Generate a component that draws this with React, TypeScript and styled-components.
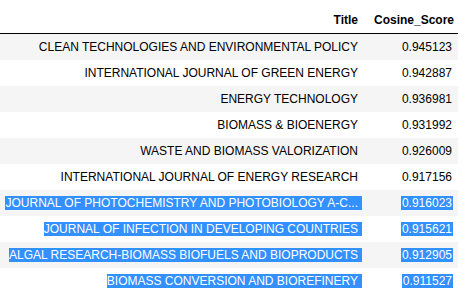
import React from 'react'
import styled, { createGlobalStyle } from 'styled-components'

const GlobalStyle = createGlobalStyle`
  body {
    margin: 0;
    background: #fff;
    font-family: 'Liberation Sans', Arial, sans-serif;
  }
`

const Wrapper = styled.div`
  padding-top: 7px;
`

const Table = styled.table`
  border-collapse: collapse;
  border-spacing: 0;
  table-layout: fixed;
  width: 458px;
  font-size: 12px;
  color: #000;
`

const HeadRow = styled.tr`
  border-bottom: 1px solid #000;
`

const Th = styled.th<{ $pad: number }>`
  text-align: right;
  font-weight: bold;
  line-height: 14px;
  padding: 6px ${(p) => p.$pad}px 6px 6px;
  white-space: nowrap;
`

const Row = styled.tr`
  &:nth-child(odd) {
    background: #f5f5f5;
  }
`

const Td = styled.td<{ $pad: number }>`
  text-align: right;
  line-height: 14px;
  padding: 6px ${(p) => p.$pad}px 6px 0;
  white-space: nowrap;
  overflow: hidden;
`

const Sel = styled.span<{ $selected: boolean; $wide?: boolean }>`
  padding: ${(p) => (p.$wide ? '0 4px 0 0' : '0 1px')};
  background: ${(p) => (p.$selected ? '#3390ff' : 'transparent')};
  color: ${(p) => (p.$selected ? '#fff' : '#000')};
`

const rows: [string, string][] = [
  ['CLEAN TECHNOLOGIES AND ENVIRONMENTAL POLICY', '0.945123'],
  ['INTERNATIONAL JOURNAL OF GREEN ENERGY', '0.942887'],
  ['ENERGY TECHNOLOGY', '0.936981'],
  ['BIOMASS & BIOENERGY', '0.931992'],
  ['WASTE AND BIOMASS VALORIZATION', '0.926009'],
  ['INTERNATIONAL JOURNAL OF ENERGY RESEARCH', '0.917156'],
  ['JOURNAL OF PHOTOCHEMISTRY AND PHOTOBIOLOGY A-C...', '0.916023'],
  ['JOURNAL OF INFECTION IN DEVELOPING COUNTRIES', '0.915621'],
  ['ALGAL RESEARCH-BIOMASS BIOFUELS AND BIOPRODUCTS', '0.912905'],
  ['BIOMASS CONVERSION AND BIOREFINERY', '0.911527'],
]

function App() {
  return (
    <Wrapper>
      <GlobalStyle />
      <Table>
        <colgroup>
          <col style={{ width: 368 }} />
          <col style={{ width: 90 }} />
        </colgroup>
        <thead>
          <HeadRow>
            <Th $pad={10}>Title</Th>
            <Th $pad={6}>Cosine_Score</Th>
          </HeadRow>
        </thead>
        <tbody>
          {rows.map(([title, score], i) => (
            <Row key={title}>
              <Td $pad={6}>
                <Sel $selected={i >= 6} $wide>
                  {title}
                </Sel>
              </Td>
              <Td $pad={5}>
                <Sel $selected={i >= 6}>{score}</Sel>
              </Td>
            </Row>
          ))}
        </tbody>
      </Table>
    </Wrapper>
  )
}

export default App
